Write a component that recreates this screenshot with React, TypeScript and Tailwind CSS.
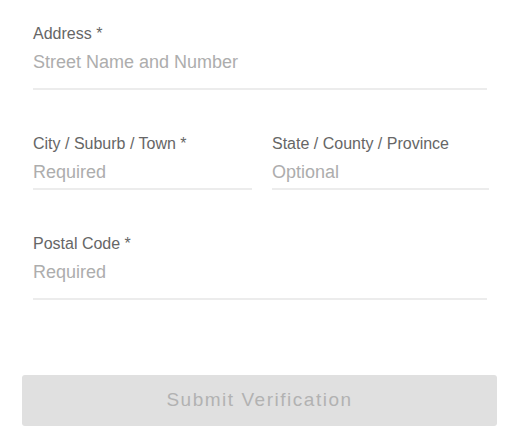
import type { ReactNode } from 'react'

function Field({ label, placeholder, compact }: { label: string; placeholder: string; compact?: boolean }) {
  return (
    <label className="flex flex-col">
      <span className="text-[16px] leading-[20px] text-[#666666]">{label}</span>
      <input
        type="text"
        placeholder={placeholder}
        className={`mt-[6px] border-b-2 border-[#ececec] text-[18px] leading-[24px] text-[#333] placeholder:text-[#adadad] outline-none bg-transparent ${compact ? 'h-[30px] pb-[3px]' : 'h-[40px] pb-[13px]'}`}
      />
    </label>
  )
}

function Row({ children }: { children: ReactNode }) {
  return <div className="grid grid-cols-[219px_217px] gap-x-5">{children}</div>
}

export default function App() {
  return (
    <div className="w-[530px] h-[440px] bg-white font-['Liberation_Sans',Arial,sans-serif]">
      <div className="pl-[33px] pr-[43px] pt-[24px] flex flex-col gap-[44px]">
        <Field label="Address *" placeholder="Street Name and Number" />
        <Row>
          <Field label="City / Suburb / Town *" placeholder="Required" compact />
          <Field label="State / County / Province" placeholder="Optional" compact />
        </Row>
        <Field label="Postal Code *" placeholder="Required" />
      </div>
      <div className="px-[22px] pr-[33px] mt-[75px]">
        <button
          disabled
          className="w-full h-[51px] rounded-[3px] bg-[#e0e0e0] text-[19px] tracking-[0.08em] text-[#b2b2b2]"
        >
          Submit Verification
        </button>
      </div>
    </div>
  )
}
